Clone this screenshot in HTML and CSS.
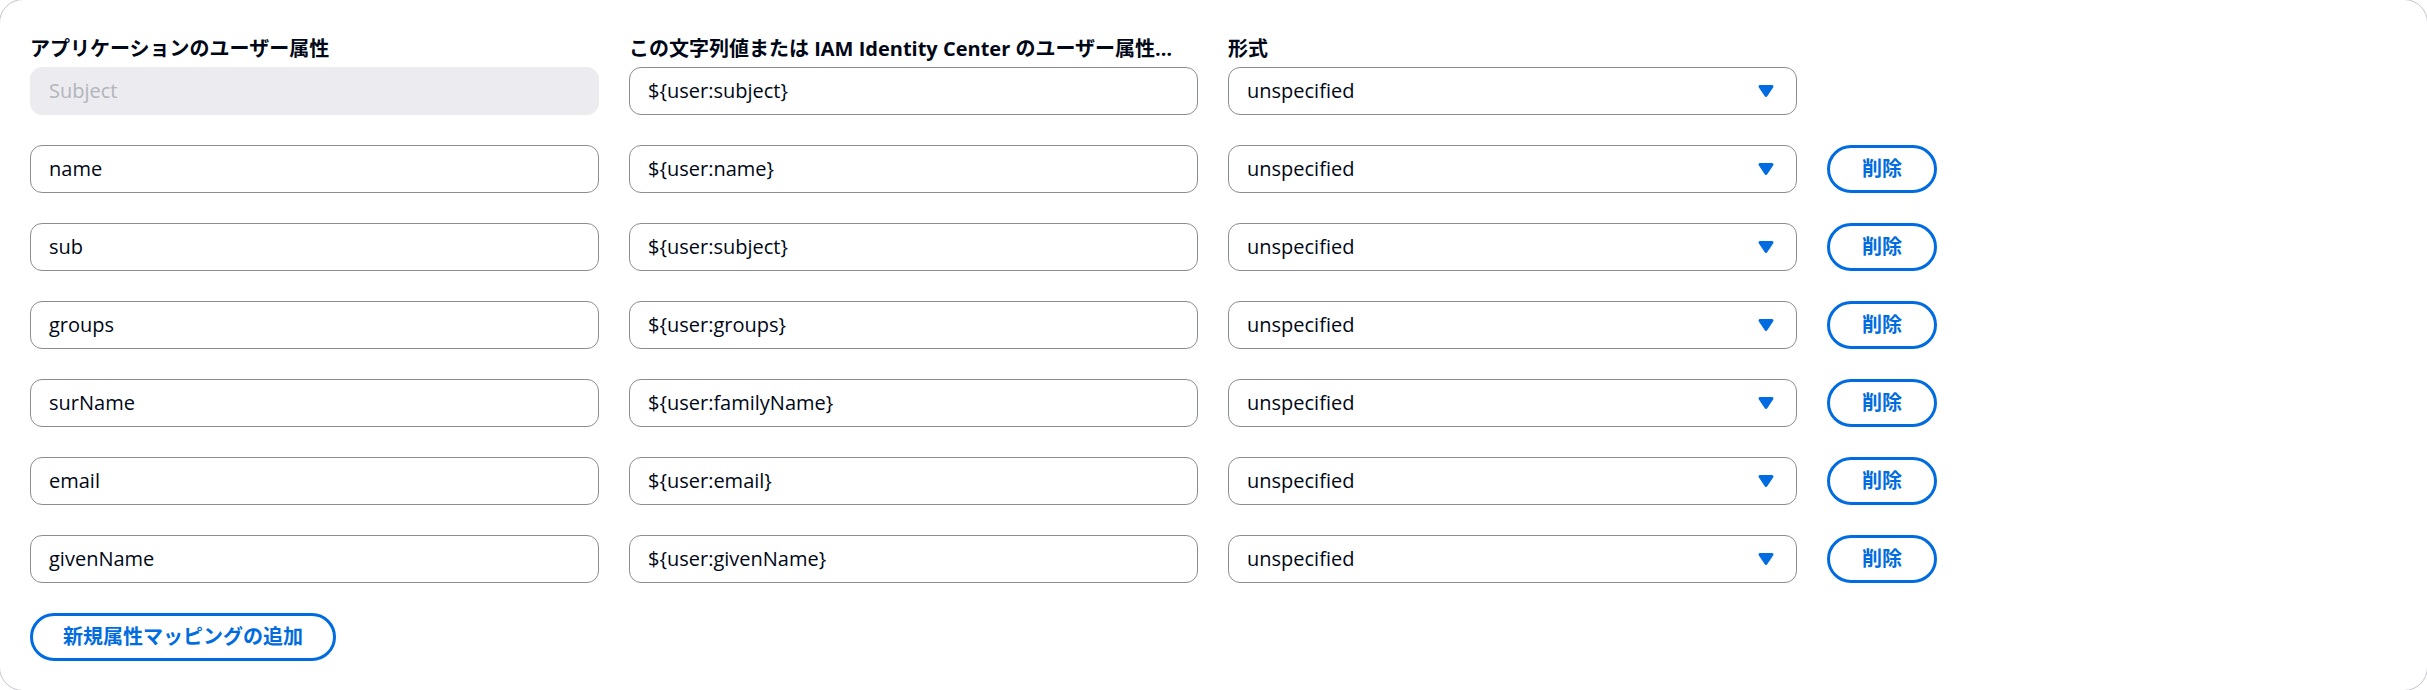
FILE: index.html
```html
<!DOCTYPE html>
<html lang="ja">
<head>
<meta charset="utf-8">
<title>属性マッピング</title>
<link rel="stylesheet" href="styles.css">
</head>
<body>
<div class="card">
  <div class="editor">
    <div class="row">
      <div class="field">
        <div class="label">アプリケーションのユーザー属性</div>
        <div class="input disabled">Subject</div>
      </div>
      <div class="field">
        <div class="label">この文字列値または IAM Identity Center のユーザー属性…</div>
        <div class="input">${user:subject}</div>
      </div>
      <div class="field">
        <div class="label">形式</div>
        <div class="select"><span>unspecified</span><svg class="caret" viewBox="0 0 16 16"><path d="M4 5h8l-4 6-4-6z"/></svg></div>
      </div>
      <div></div>
    </div>
    <div class="row">
      <div class="input">name</div>
      <div class="input">${user:name}</div>
      <div class="select"><span>unspecified</span><svg class="caret" viewBox="0 0 16 16"><path d="M4 5h8l-4 6-4-6z"/></svg></div>
      <button class="btn del">削除</button>
    </div>
    <div class="row">
      <div class="input">sub</div>
      <div class="input">${user:subject}</div>
      <div class="select"><span>unspecified</span><svg class="caret" viewBox="0 0 16 16"><path d="M4 5h8l-4 6-4-6z"/></svg></div>
      <button class="btn del">削除</button>
    </div>
    <div class="row">
      <div class="input">groups</div>
      <div class="input">${user:groups}</div>
      <div class="select"><span>unspecified</span><svg class="caret" viewBox="0 0 16 16"><path d="M4 5h8l-4 6-4-6z"/></svg></div>
      <button class="btn del">削除</button>
    </div>
    <div class="row">
      <div class="input">surName</div>
      <div class="input">${user:familyName}</div>
      <div class="select"><span>unspecified</span><svg class="caret" viewBox="0 0 16 16"><path d="M4 5h8l-4 6-4-6z"/></svg></div>
      <button class="btn del">削除</button>
    </div>
    <div class="row">
      <div class="input">email</div>
      <div class="input">${user:email}</div>
      <div class="select"><span>unspecified</span><svg class="caret" viewBox="0 0 16 16"><path d="M4 5h8l-4 6-4-6z"/></svg></div>
      <button class="btn del">削除</button>
    </div>
    <div class="row">
      <div class="input">givenName</div>
      <div class="input">${user:givenName}</div>
      <div class="select"><span>unspecified</span><svg class="caret" viewBox="0 0 16 16"><path d="M4 5h8l-4 6-4-6z"/></svg></div>
      <button class="btn del">削除</button>
    </div>
    <div class="actions">
      <button class="btn add">新規属性マッピングの追加</button>
    </div>
  </div>
</div>
</body>
</html>
```
FILE: styles.css
```css
html, body {
  margin: 0;
  padding: 0;
  background: #ffffff;
  overflow: hidden;
}
body {
  font-family: "Open Sans", "Noto Sans CJK JP", sans-serif;
  font-size: 20px;
  line-height: 30px;
  color: #000716;
}
.card {
  box-sizing: border-box;
  margin: -1px;
  width: calc(100% + 2px);
  height: 692px;
  border: 1px solid #c6c6cd;
  border-radius: 24px;
  background: #ffffff;
  padding: 34px 30px 0 30px;
}
.editor {
  display: flex;
  flex-direction: column;
  gap: 30px;
}
.row {
  display: grid;
  grid-template-columns: 569px 569px 569px auto;
  column-gap: 30px;
  align-items: end;
}
.field {
  display: flex;
  flex-direction: column;
  gap: 3px;
  min-width: 0;
}
.label {
  font-weight: 700;
  white-space: nowrap;
  color: #000716;
}
.input, .select {
  box-sizing: border-box;
  height: 48px;
  border: 1px solid #8c8c94;
  border-radius: 12px;
  padding: 0 18px;
  display: flex;
  align-items: center;
  background: #ffffff;
  color: #000716;
  white-space: nowrap;
}
.input.disabled {
  background: #ebebf0;
  border-color: #ebebf0;
  color: #b4b4bb;
}
.select {
  justify-content: space-between;
}
.caret {
  width: 24px;
  height: 24px;
  flex: none;
}
.caret path {
  fill: #006ce0;
  stroke: #006ce0;
  stroke-width: 2;
  stroke-linejoin: round;
}
.btn {
  box-sizing: border-box;
  height: 48px;
  border: 3px solid #006ce0;
  border-radius: 30px;
  background: #ffffff;
  color: #006ce0;
  font-family: "Open Sans", "Noto Sans CJK JP", sans-serif;
  font-size: 20px;
  line-height: 30px;
  font-weight: 700;
  cursor: pointer;
  justify-self: start;
}
.btn.del {
  padding: 0 32px;
}
.btn.add {
  padding: 0 30px;
}
.actions {
  display: flex;
}
```
